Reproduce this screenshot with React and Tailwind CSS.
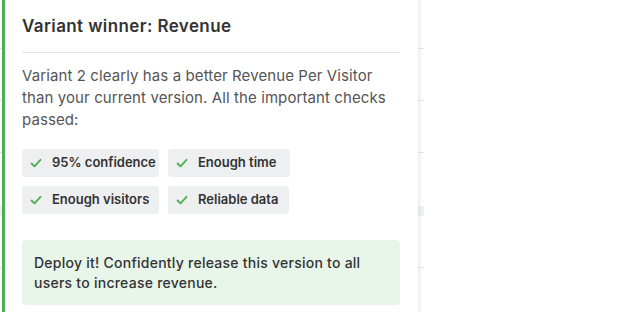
import React from "react";

function Check() {
  return (
    <svg width="12" height="12" viewBox="0 0 12 12" fill="none" className="shrink-0">
      <path d="M1.5 6.5 L4.5 9.3 L10.5 2.8" stroke="#4caf50" strokeWidth="1.8" strokeLinecap="round" strokeLinejoin="round" />
    </svg>
  );
}

function Chip({ label, w }) {
  return (
    <div className={`flex h-[28px] items-center gap-[10px] rounded-[3px] bg-[#eeeff1] pl-[8px] pr-[6px] text-[13px] font-semibold text-[#333333] ${w}`}>
      <Check />
      <span className="whitespace-nowrap">{label}</span>
    </div>
  );
}

export default function App() {
  return (
    <div className="relative h-[312px] w-[632px] overflow-hidden bg-white" style={{ fontFamily: "Inter, 'Open Sans', sans-serif" }}>
      <div className="flex w-[424px] flex-col">
        <div className="h-[49px] border-b border-[#e6e6e6]" />
        <div className="h-[52px] border-b border-[#e6e6e6]" />
        <div className="h-[52px] border-b border-[#e6e6e6]" />
        <div className="h-[53px]" />
        <div className="h-[10px] bg-[#f1f2f4]" />
        <div className="h-[52px] border-b border-[#e6e6e6]" />
      </div>
      <div className="absolute left-[2px] top-[-8px] w-[416px] rounded-tr-[6px] border-l-[3px] border-[#4cb050] bg-white pb-[20px] pl-[17px] pr-[18px] pt-[22px] shadow-[1px_0_5px_rgba(0,0,0,0.1)]">
        <div className="border-b border-[#e5e5e5] pb-[14px] text-[17px] font-semibold leading-[24px] tracking-[0.4px] text-[#333333]">
          Variant winner: Revenue
        </div>
        <p className="mt-[12px] text-[15px] leading-[22px] tracking-[0.1px] text-[#555555]">
          Variant 2 clearly has a better Revenue Per Visitor
          <br />
          than your current version. All the important checks
          <br />
          passed:
        </p>
        <div className="mt-[18px] grid w-[268px] grid-cols-[137px_122px] gap-[9px]">
          <Chip label="95% confidence" w="w-[137px]" />
          <Chip label="Enough time" w="w-[122px]" />
          <Chip label="Enough visitors" w="w-[137px]" />
          <Chip label="Reliable data" w="w-[121px]" />
        </div>
        <div className="mt-[26px] rounded-[4px] bg-[#e8f5e9] px-[12px] pb-[12px] pt-[13px] text-[14px] font-medium leading-[20px] tracking-[0.25px] text-[#333333]">
          Deploy it! Confidently release this version to all
          <br />
          users to increase revenue.
        </div>
      </div>
    </div>
  );
}
